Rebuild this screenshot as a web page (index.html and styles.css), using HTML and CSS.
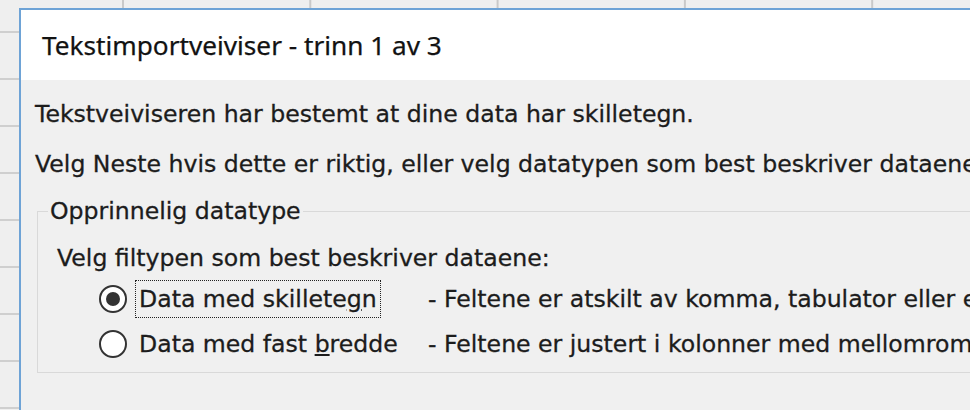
FILE: index.html
```html
<!DOCTYPE html>
<html lang="no">
<head>
<meta charset="utf-8">
<title>Tekstimportveiviser</title>
<link rel="stylesheet" href="styles.css">
</head>
<body>
<div class="dialog">
  <div class="titlebar">Tekstimportveiviser - trinn 1 av 3</div>
  <div class="content">
    <p class="line first">Tekstveiviseren har bestemt at dine data har skilletegn.</p>
    <p class="line second">Velg Neste hvis dette er riktig, eller velg datatypen som best beskriver dataene.</p>
    <fieldset class="group">
      <legend class="legend">Opprinnelig datatype</legend>
      <p class="line prompt">Velg filtypen som best beskriver dataene:</p>
      <div class="option">
        <span class="radio checked"></span>
        <span class="label-cell"><span class="label focused">Data med skillete<u>g</u>n</span></span>
        <span class="desc">- Feltene er atskilt av komma, tabulator eller et annet tegn.</span>
      </div>
      <div class="option second-option">
        <span class="radio"></span>
        <span class="label-cell"><span class="label">Data med fast <u>b</u>redde</span></span>
        <span class="desc">- Feltene er justert i kolonner med mellomrom mellom hvert felt.</span>
      </div>
    </fieldset>
  </div>
</div>
</body>
</html>
```

FILE: styles.css
```css
html, body {
  margin: 0;
  padding: 0;
  width: 970px;
  height: 410px;
  overflow: hidden;
}

body {
  background-color: #efefef;
  background-image:
    linear-gradient(to right, #c9c9c9 0, #c9c9c9 1.5px, transparent 1.5px),
    linear-gradient(to bottom, #cfcfcf 0, #cfcfcf 1.5px, transparent 1.5px);
  background-size: 187.3px 100%, 100% 47px;
  background-position: 122px 0, 0 31px;
  font-family: "DejaVu Sans", Verdana, sans-serif;
  color: #1c1c1c;
}

.dialog {
  margin: 8px 0 0 19px;
  width: 1100px;
  height: 500px;
  border-top: 2px solid #6ea3d6;
  border-left: 2px solid #6ea3d6;
  background: #f0f0f0;
}

.titlebar {
  height: 70px;
  background: #ffffff;
  box-sizing: border-box;
  padding: 20px 0 0 21px;
  font-family: "Noto Sans", "Open Sans", sans-serif;
  font-size: 26.2px;
  line-height: 30px;
  color: #121212;
  -webkit-text-stroke: 0.25px #121212;
}

.content {
  padding: 19px 0 0 14px;
  font-size: 23.6px;
  line-height: 30px;
  -webkit-text-stroke: 0.3px #1c1c1c;
}

.line {
  margin: 0;
  white-space: nowrap;
}

.second {
  margin-top: 20px;
}

.group {
  margin: 17px 0 0 2px;
  padding: 0 0 0 19px;
  border: 1.5px solid #d9d9d9;
  height: 177px;
  box-sizing: border-box;
}

.legend {
  margin-left: -9px;
  padding: 0 2px;
  margin-bottom: 0;
  white-space: nowrap;
}

.prompt {
  margin-top: 17px;
}

.option {
  display: flex;
  align-items: center;
  height: 39px;
  margin-top: 6px;
  white-space: nowrap;
}

.second-option {
  margin-top: 6px;
}

.radio {
  flex: none;
  width: 24px;
  height: 24px;
  margin-left: 42px;
  border: 2.5px solid #333333;
  border-radius: 50%;
  background: #ffffff;
  display: flex;
  align-items: center;
  justify-content: center;
}

.radio.checked::after {
  content: "";
  width: 14px;
  height: 14px;
  border-radius: 50%;
  background: #333333;
}

.label-cell {
  flex: none;
  width: 293px;
  margin-left: 8px;
}

.label {
  display: inline-block;
  padding: 3px 3px;
  border: 1.5px dotted transparent;
}

.label.focused {
  border-color: #222222;
}

.label u {
  text-underline-offset: 2px;
}

.desc {
  flex: none;
}
```
